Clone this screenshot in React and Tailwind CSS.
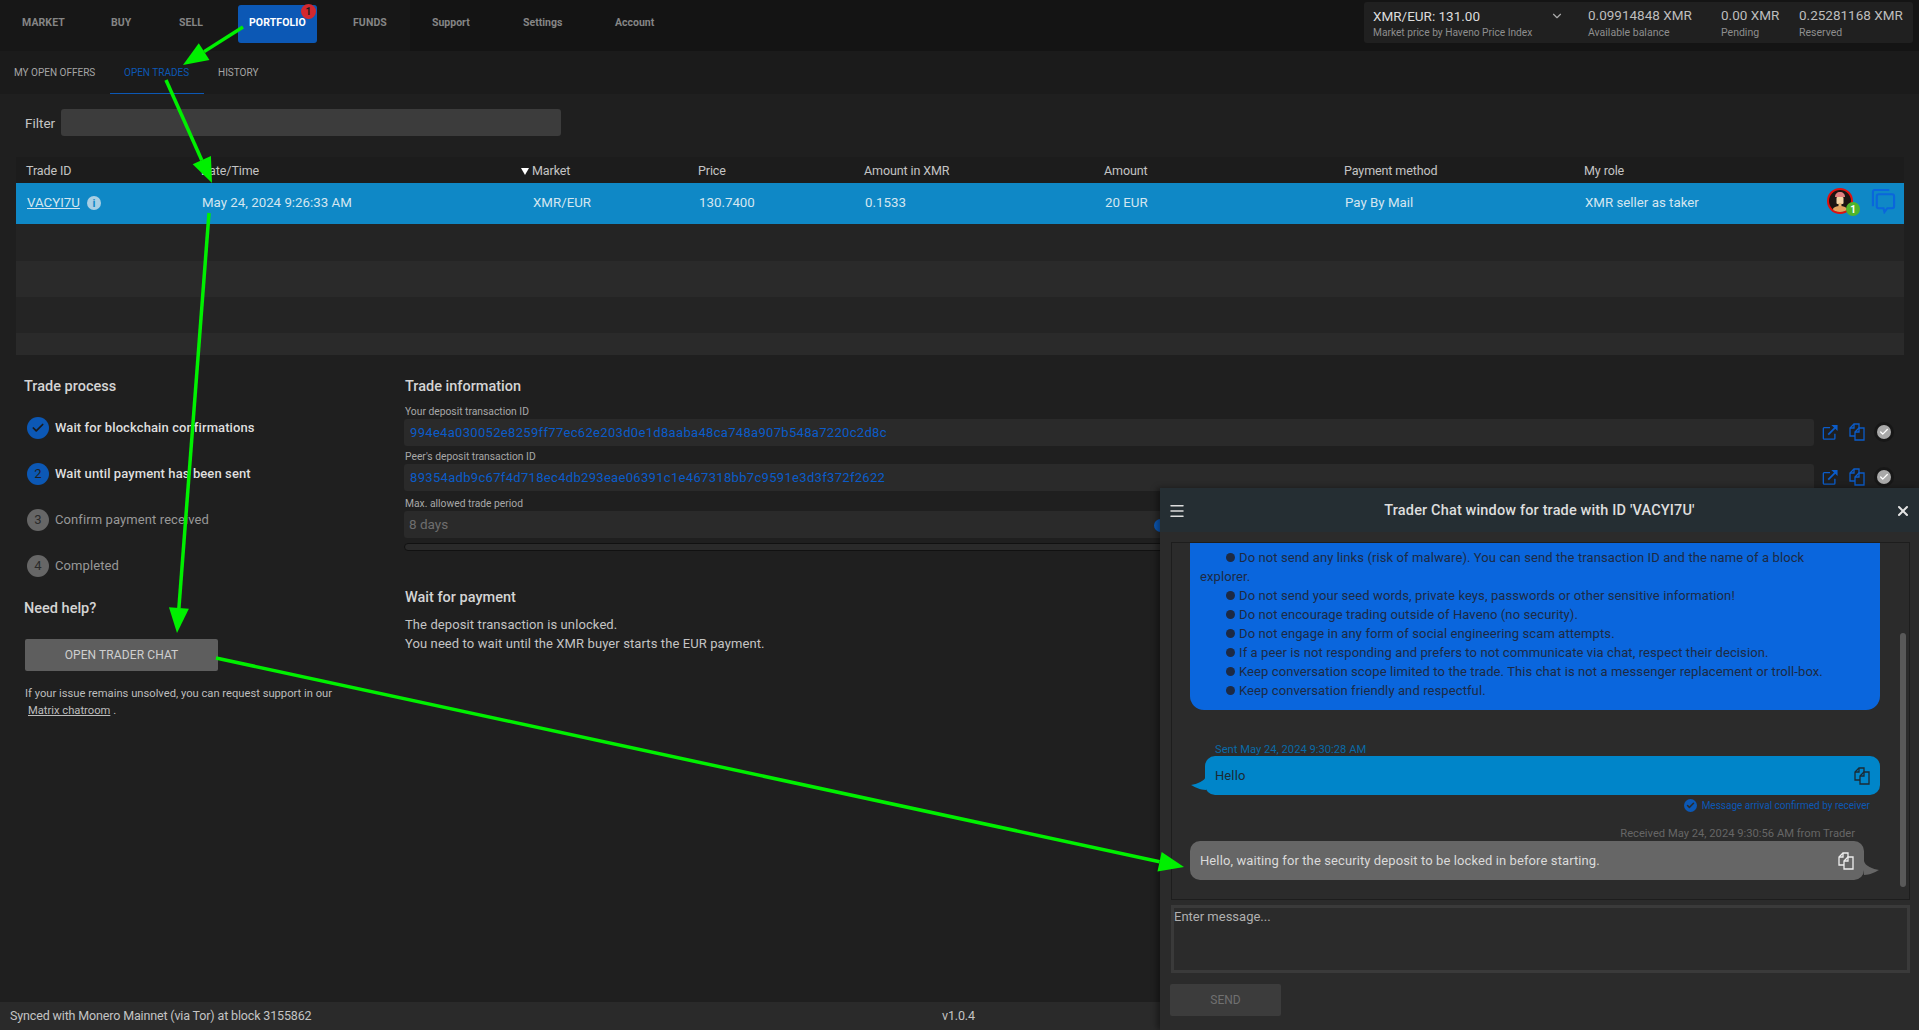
import { ChevronDown, Menu, X, Check } from "lucide-react";

const font = { fontFamily: 'Roboto, "Liberation Sans", sans-serif' };

const mainNav = [
  { label: "MARKET", cell: "w-[89px]" },
  { label: "BUY", cell: "w-[68px]" },
  { label: "SELL", cell: "w-[70px]" },
  { label: "PORTFOLIO", cell: "w-[104px]", active: true },
  { label: "FUNDS", cell: "w-[79px]" },
];

const rules = [
  "Do not send your seed words, private keys, passwords or other sensitive information!",
  "Do not encourage trading outside of Haveno (no security).",
  "Do not engage in any form of social engineering scam attempts.",
  "If a peer is not responding and prefers to not communicate via chat, respect their decision.",
  "Keep conversation scope limited to the trade. This chat is not a messenger replacement or troll-box.",
  "Keep conversation friendly and respectful.",
];

function CopyIcon({ className }) {
  return (
    <svg viewBox="0 0 16 18" className={className} fill="none" stroke="currentColor" strokeWidth="1.3">
      <path d="M6 13H1V5l4-4h5v4" />
      <path d="M5 1v4H1" />
      <path d="M6 9l4-4h5v12H6z" />
      <path d="M10 5v4H6" />
    </svg>
  );
}

function OpenIcon({ className }) {
  return (
    <svg viewBox="0 0 18 18" className={className} fill="none" stroke="currentColor" strokeWidth="1.5">
      <path d="M9 4H2.500a1 1 0 0 0-1 1v11a1 1 0 0 0 1 1h11a1 1 0 0 0 1-1v-5" />
      <path d="M7 12l9-9" strokeWidth="2" />
      <path d="M10.500 1H17.500V8z" fill="currentColor" stroke="none" />
    </svg>
  );
}

function VerifiedDot({ className }) {
  return (
    <div className={`flex h-[20px] w-[20px] items-center justify-center rounded-full bg-[#171717] ${className}`}>
      <div className="flex h-[14px] w-[14px] items-center justify-center rounded-full bg-[#a9a9a9]">
        <Check size={10} strokeWidth={3} className="text-white" />
      </div>
    </div>
  );
}

function Avatar() {
  return (
    <svg viewBox="0 0 34 34" className="absolute left-[1827px] top-[188px] h-[34px] w-[34px]">
      <circle cx="13" cy="13" r="12" fill="#1c1412" stroke="#e0100f" strokeWidth="2" />
      <path d="M8 9c0-3 2-5 5-5s5 2 5 5z" fill="#e07f7f" />
      <rect x="9.500" y="9" width="7" height="7" rx="1" fill="#f4d6a8" />
      <rect x="11.500" y="15" width="3" height="4" fill="#e8b979" />
      <ellipse cx="13" cy="21" rx="7" ry="3" fill="#e2a25e" />
      <circle cx="26" cy="21" r="7" fill="#4fb52a" />
      <text x="26" y="24.500" textAnchor="middle" fontSize="10" fontWeight="700" fill="#fff" fontFamily="Roboto, sans-serif">1</text>
    </svg>
  );
}

function ForumIcon() {
  return (
    <svg viewBox="0 0 26 26" className="absolute left-[1871px] top-[189px] h-[25px] w-[25px]" fill="none" stroke="#0a66dc" strokeWidth="2.2">
      <path d="M2 18V3a2 2 0 0 1 2-2h15" />
      <path d="M8 5.500h14a2 2 0 0 1 2 2V18a2 2 0 0 1-2 2h-5l-3 4-1-4H8a2 2 0 0 1-2-2V7.500a2 2 0 0 1 2-2z" />
    </svg>
  );
}

function Step({ n, label, tone }) {
  const on = tone === "on";
  return (
    <div className="flex h-[46px] items-center">
      <div className={`ml-[27px] flex h-[22px] w-[22px] items-center justify-center rounded-full text-[13px] ${on ? "bg-[#0c58b5] text-[#1f1f1f]" : "bg-[#666] text-[#2a2a2a]"}`}>
        {n === "check" ? <Check size={14} strokeWidth={3} className="text-[#1a1a1a]" /> : n}
      </div>
      <span className={`ml-[6px] text-[13px] tracking-[0.1px] ${on ? "font-medium text-[#dedede]" : "text-[#989898]"}`}>{label}</span>
    </div>
  );
}

function TxField({ label, value, top }) {
  return (
    <div className={`absolute left-[404px] ${top} w-[1410px]`}>
      <div className="h-[14px] pl-[1px] text-[10.3px] leading-[14px] text-[#a8a8a8]">{label}</div>
      <div className="flex h-[27px] items-center rounded-[3px] bg-[#2a2a2a] pl-[6px] text-[13px] tracking-[0.32px] text-[#0b5cc9]">{value}</div>
    </div>
  );
}

function Arrow({ x1, y1, x2, y2 }) {
  const a = Math.atan2(y2 - y1, x2 - x1);
  const len = 25;
  const w = 10;
  const bx = x2 - Math.cos(a) * len;
  const by = y2 - Math.sin(a) * len;
  const px = -Math.sin(a) * w;
  const py = Math.cos(a) * w;
  return (
    <g>
      <line x1={x1} y1={y1} x2={bx} y2={by} stroke="#00f000" strokeWidth="3.5" />
      <polygon points={`${x2},${y2} ${bx + px},${by + py} ${bx - px},${by - py}`} fill="#00f000" />
    </g>
  );
}

export default function App() {
  return (
    <div style={font} className="relative h-[1030px] w-[1919px] overflow-hidden bg-[#1f1f1f] text-[#d6d6d6]">
      {/* top nav */}
      <header className="relative flex h-[51px] bg-[#141414]">
        <div className="flex h-full w-[410px] shrink-0 items-center bg-[#171717] pb-[6px] pl-[22px] text-[10.5px] font-bold tracking-[0.1px] text-[#858585]">
          {mainNav.map((item) => (
            <div key={item.label} className={`relative shrink-0 ${item.cell}`}>
              {item.active && (
                <div className="absolute left-[-11px] top-[-10px] h-[38px] w-[79px] rounded-[3px] bg-[#0c58b5]">
                  <span className="absolute left-[63px] top-[-1px] flex h-[15px] w-[15px] items-center justify-center rounded-full bg-[#d3282f] text-[10px] text-[#1b1b1b]">1</span>
                </div>
              )}
              <span className={`relative ${item.active ? "text-white" : ""}`}>{item.label}</span>
            </div>
          ))}
        </div>
        <div className="flex h-full items-center pb-[6px] pl-[22px] text-[10.5px] font-bold text-[#858585]">
          <div className="w-[91px]">Support</div>
          <div className="w-[92px]">Settings</div>
          <div>Account</div>
        </div>
        <div className="absolute left-[1364px] top-[2px] flex h-[41px] w-[549px] rounded-[3px] bg-[#202020]">
          <div className="relative w-[224px] pl-[9px]">
            <div className="mt-[6px] text-[13.5px] leading-[17px] text-[#dcdcdc]">XMR/EUR: 131.00</div>
            <div className="text-[10.2px] leading-[15px] text-[#8e8e8e]">Market price by Haveno Price Index</div>
            <ChevronDown size={14} className="absolute left-[186px] top-[7px] text-[#aaa]" />
          </div>
          <div className="w-[133px]">
            <div className="mt-[5px] text-[13.5px] leading-[17px] text-[#bdbdbd]">0.09914848 XMR</div>
            <div className="text-[10.5px] leading-[17px] text-[#8e8e8e]">Available balance</div>
          </div>
          <div className="w-[78px]">
            <div className="mt-[5px] text-[13.5px] leading-[17px] text-[#bdbdbd]">0.00 XMR</div>
            <div className="text-[10.5px] leading-[17px] text-[#8e8e8e]">Pending</div>
          </div>
          <div>
            <div className="mt-[5px] text-[13.5px] leading-[17px] text-[#bdbdbd]">0.25281168 XMR</div>
            <div className="text-[10.5px] leading-[17px] text-[#8e8e8e]">Reserved</div>
          </div>
        </div>
      </header>

      {/* sub nav */}
      <nav className="flex h-[43px] items-center bg-[#1b1b1b] text-[10px] text-[#a5a5a5]">
        <div className="w-[110px] pl-[14px]">MY OPEN OFFERS</div>
        <div className="flex h-full w-[94px] items-center border-b border-[#0c58b5] pl-[14px] text-[#0c58b5]">OPEN TRADES</div>
        <div className="pl-[14px]">HISTORY</div>
      </nav>

      {/* filter */}
      <div className="absolute left-[25px] top-[109px] flex h-[27px] items-center">
        <span className="w-[36px] pt-[2px] text-[13.5px] text-[#c4c4c4]">Filter</span>
        <div className="h-[27px] w-[500px] rounded-[3px] bg-[#3c3c3c]" />
      </div>

      {/* trades table */}
      <section className="absolute left-[16px] top-[157px] w-[1888px]">
        <div className="grid h-[26px] grid-cols-[175px_331px_166px_166px_240px_240px_240px_1fr] items-center bg-[#1c1c1c] pl-[10px] pt-[2px] text-[12.5px] tracking-[-0.1px] text-[#c4c4c4]">
          <div>Trade ID</div>
          <div>Date/Time</div>
          <div className="relative">
            <span className="absolute left-[-11px] top-[6px] h-0 w-0 border-x-[4.5px] border-t-[7px] border-x-transparent border-t-white" />
            Market
          </div>
          <div>Price</div>
          <div>Amount in XMR</div>
          <div>Amount</div>
          <div>Payment method</div>
          <div>My role</div>
        </div>
        <div className="grid h-[41px] grid-cols-[175px_331px_166px_166px_240px_240px_240px_1fr] items-center bg-[#0f88c6] pb-[1px] pl-[11px] text-[13.3px] text-[#d4e6f0]">
          <div className="flex items-center gap-[7px]">
            <span className="underline">VACYI7U</span>
            <span className="flex h-[14px] w-[14px] items-center justify-center rounded-full bg-[#a8cfe4] text-[11px] font-bold leading-none text-[#0f88c6]">i</span>
          </div>
          <div>May 24, 2024 9:26:33 AM</div>
          <div>XMR/EUR</div>
          <div>130.7400</div>
          <div>0.1533</div>
          <div>20 EUR</div>
          <div>Pay By Mail</div>
          <div>XMR seller as taker</div>
        </div>
        <div className="h-[37px] bg-[#242424]" />
        <div className="h-[36px] bg-[#2a2a2a]" />
        <div className="h-[36px] bg-[#242424]" />
        <div className="h-[22px] bg-[#2a2a2a]" />
      </section>
      <Avatar />
      <ForumIcon />

      {/* trade process */}
      <section className="absolute left-0 top-[377px] w-[390px]">
        <h3 className="pl-[24px] text-[14.5px] font-medium leading-[20px] text-[#d4d4d4]">Trade process</h3>
        <div className="mt-[8px]">
          <Step n="check" label="Wait for blockchain confirmations" tone="on" />
          <Step n="2" label="Wait until payment has been sent" tone="on" />
          <Step n="3" label="Confirm payment received" />
          <Step n="4" label="Completed" />
        </div>
        <h3 className="mt-[10px] pl-[24px] text-[14.5px] font-medium leading-[20px] text-[#d4d4d4]">Need help?</h3>
        <button className="ml-[25px] mt-[20px] h-[32px] w-[193px] rounded-[2px] bg-[#5e5e5e] text-[12px] tracking-[0.1px] text-[#cfcfcf]">OPEN TRADER CHAT</button>
        <p className="ml-[25px] mt-[14px] text-[11.2px] leading-[17px] text-[#bdbdbd]">
          If your issue remains unsolved, you can request support in our
          <br />
          <span className="ml-[3px] underline">Matrix chatroom</span> .
        </p>
      </section>

      {/* trade information */}
      <h3 className="absolute left-[405px] top-[377px] text-[14.5px] font-medium leading-[20px] text-[#d4d4d4]">Trade information</h3>
      <TxField top="top-[405px]" label="Your deposit transaction ID" value="994e4a030052e8259ff77ec62e203d0e1d8aaba48ca748a907b548a7220c2d8c" />
      <TxField top="top-[450px]" label="Peer's deposit transaction ID" value="89354adb9c67f4d718ec4db293eae06391c1e467318bb7c9591e3d3f372f2622" />
      <div className="absolute left-[404px] top-[497px] w-[770px]">
        <div className="h-[14px] pl-[1px] text-[10.3px] leading-[14px] text-[#a8a8a8]">Max. allowed trade period</div>
        <div className="flex h-[27px] items-center rounded-[3px] bg-[#2a2a2a] pl-[5px] text-[13.5px] text-[#6e6e6e]">8 days</div>
        <div className="mt-[5px] h-[8px] rounded-full border border-[#111] bg-[#2a2a2a]" />
        <div className="absolute left-[750px] top-[22px] h-[13px] w-[13px] rounded-full bg-[#0c58b5]" />
      </div>
      <OpenIcon className="absolute left-[1822px] top-[424px] h-[16px] w-[16px] text-[#0b5cc9]" />
      <CopyIcon className="absolute left-[1849px] top-[423px] h-[18px] w-[16px] text-[#0b5cc9]" />
      <VerifiedDot className="absolute left-[1874px] top-[422px]" />
      <OpenIcon className="absolute left-[1822px] top-[469px] h-[16px] w-[16px] text-[#0b5cc9]" />
      <CopyIcon className="absolute left-[1849px] top-[468px] h-[18px] w-[16px] text-[#0b5cc9]" />
      <VerifiedDot className="absolute left-[1874px] top-[467px]" />

      <section className="absolute left-[405px] top-[588px]">
        <h3 className="text-[14.5px] font-medium leading-[20px] text-[#d4d4d4]">Wait for payment</h3>
        <p className="mt-[7px] text-[13px] leading-[19px] tracking-[0.1px] text-[#c4c4c4]">
          The deposit transaction is unlocked.
          <br />
          You need to wait until the XMR buyer starts the EUR payment.
        </p>
      </section>

      {/* status bar */}
      <footer className="absolute bottom-0 left-0 flex h-[28px] w-full items-center bg-[#2a2a2a] pl-[10px] text-[12.5px] tracking-[-0.15px] text-[#c4c4c4]">
        <span>Synced with Monero Mainnet (via Tor) at block 3155862</span>
        <span className="absolute left-[942px]">v1.0.4</span>
      </footer>

      {/* chat window */}
      <aside className="absolute left-[1160px] top-[488px] h-[542px] w-[759px] bg-[#2b2b2b] shadow-[-3px_0_6px_rgba(0,0,0,0.4)]">
        <div className="relative flex h-[44px] items-center justify-center bg-[#252e33] pt-[1px] text-[14.5px] font-medium tracking-[0.15px] text-[#dedede]">
          <Menu size={18} className="absolute left-[8px] text-[#dddddd]" />
          Trader Chat window for trade with ID 'VACYI7U'
          <X size={16} strokeWidth={3} className="absolute right-[8px] text-[#e4e4e4]" />
        </div>
        <div className="absolute left-[11px] top-[54px] h-[358px] w-[739px] overflow-hidden border border-[#1d1d1d]">
          <div className="absolute left-[18px] top-0 h-[167px] w-[690px] rounded-b-[14px] bg-[#0a66dd] px-[10px] pt-[5px] text-[13px] leading-[19px] tracking-[0.1px] text-[#1d2a44]">
            <p>
              <span className="ml-[26px] mr-[4px] inline-block h-[9px] w-[9px] rounded-full bg-[#1d2a44]" />
              Do not send any links (risk of malware). You can send the transaction ID and the name of a block
              <br />
              explorer.
            </p>
            {rules.map((r) => (
              <p key={r}>
                <span className="ml-[26px] mr-[4px] inline-block h-[9px] w-[9px] rounded-full bg-[#1d2a44]" />
                {r}
              </p>
            ))}
          </div>
          <div className="absolute left-[43px] top-[200px] text-[11.2px] leading-[14px] text-[#0a6aa6]">Sent May 24, 2024 9:30:28 AM</div>
          <svg viewBox="0 0 16 14" className="absolute left-[19px] top-[233px] h-[14px] w-[16px]"><path d="M15 0C14 5 6 8 0 9c4 2 9 5 15 5z" fill="#0085c9" /></svg>
          <div className="absolute left-[33px] top-[213px] flex h-[39px] w-[675px] items-center rounded-[10px] bg-[#0085c9] pl-[10px] text-[13px] tracking-[0.1px] text-[#1b2a33]">
            Hello
            <CopyIcon className="absolute right-[10px] top-[11px] h-[18px] w-[16px] text-[#1b2a33]" />
          </div>
          <div className="absolute right-[39px] top-[255px] flex items-center gap-[5px] text-[10px] text-[#0c58b5]">
            <span className="flex h-[13px] w-[13px] items-center justify-center rounded-full bg-[#0c58b5]"><Check size={9} strokeWidth={4} className="text-[#2b2b2b]" /></span>
            Message arrival confirmed by receiver
          </div>
          <div className="absolute right-[54px] top-[284px] text-[11.2px] leading-[14px] text-[#666]">Received May 24, 2024 9:30:56 AM from Trader</div>
          <div className="absolute left-[18px] top-[298px] flex h-[39px] w-[674px] items-center rounded-[10px] bg-[#666] pl-[10px] text-[13px] tracking-[0.1px] text-[#dadada]">
            Hello, waiting for the security deposit to be locked in before starting.
            <CopyIcon className="absolute right-[10px] top-[11px] h-[18px] w-[16px] text-[#eeeeee]" />
          </div>
          <svg viewBox="0 0 16 14" className="absolute left-[691px] top-[318px] h-[14px] w-[16px]"><path d="M1 0c1 5 9 8 15 9-4 2-9 5-15 5z" fill="#666" /></svg>
          <div className="absolute left-[728px] top-[90px] h-[254px] w-[6px] rounded-full bg-[#595959]" />
        </div>
        <div className="absolute left-[11px] top-[417px] h-[68px] w-[739px] border-[3px] border-[#3a3a3a] text-[13px] leading-[18px] text-[#b0b0b0]">Enter message...</div>
        <button className="absolute left-[10px] top-[496px] h-[32px] w-[111px] rounded-[2px] bg-[#3c3c3c] text-[12px] text-[#707070]">SEND</button>
      </aside>

      {/* annotation arrows */}
      <svg className="pointer-events-none absolute left-0 top-0" width="1919" height="1030">
        <Arrow x1={243} y1={27} x2={183} y2={65} />
        <Arrow x1={166} y1={80} x2={212} y2={183} />
        <Arrow x1={209} y1={213} x2={177} y2={633} />
        <Arrow x1={216} y1={658} x2={1184} y2={867} />
      </svg>
    </div>
  );
}
